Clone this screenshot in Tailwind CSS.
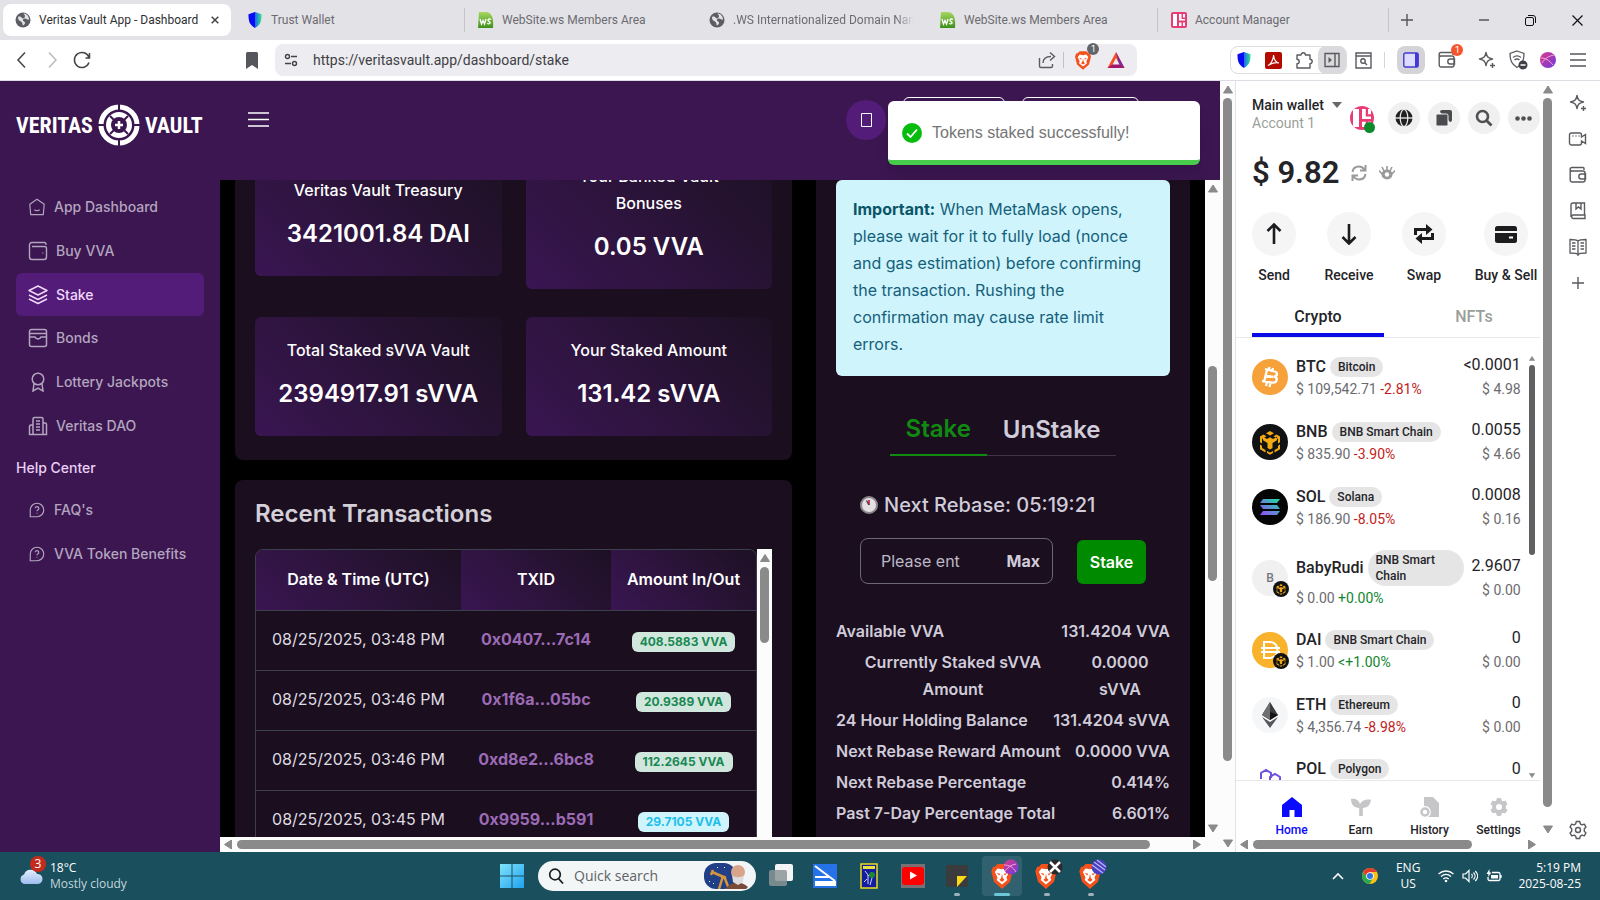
<!DOCTYPE html>
<html lang="en">
<head>
    <meta charset="UTF-8">
    <meta name="viewport" content="width=device-width, initial-scale=1.0">
    <title>Veritas Vault App - Dashboard</title>
    <script src="https://cdn.jsdelivr.net/npm/@tailwindcss/browser@4"></script>
</head>
<body class="h-screen flex flex-col overflow-hidden bg-white font-['Inter',sans-serif]">

    <!-- Shared icons -->
    <svg class="absolute w-0 h-0">
        <defs>
            <linearGradient id="gTrust" x1="0" x2="1"><stop offset=".48" stop-color="#0a0af5"/><stop offset=".52" stop-color="#1b6ff0"/><stop offset="1" stop-color="#35e08a"/></linearGradient>
            <linearGradient id="gSol" x1="0" y1="1" x2="1" y2="0"><stop stop-color="#9945ff"/><stop offset="1" stop-color="#19e0a0"/></linearGradient>
            <linearGradient id="gBall" x1="0" y1="0" x2="1" y2="1"><stop stop-color="#e0398b"/><stop offset="1" stop-color="#6a3be0"/></linearGradient>
            <linearGradient id="gWin" x1="0" y1="0" x2="1" y2="1"><stop stop-color="#7fe3fb"/><stop offset="1" stop-color="#1fa2ef"/></linearGradient>
            <linearGradient id="gCloud" x1="0" y1="0" x2="0" y2="1"><stop stop-color="#e4edfb"/><stop offset="1" stop-color="#9dbdf0"/></linearGradient>
            <linearGradient id="gWs" x1="0" y1="0" x2="0" y2="1"><stop stop-color="#a5d85f"/><stop offset="1" stop-color="#3f8f1c"/></linearGradient>
        </defs>
        <symbol id="globe" viewBox="0 0 16 16"><circle cx="8" cy="8" r="7.500" fill="#5c5e62"/><path d="M3 5c2-1 3 0 4 1s3 0 3-2-2-1-1-2.500c3 .5 5 3 5 6-1 1-2-1-4-1s-3 2-1 3 1 3-1 4c-1-1 0-3-2-4S3 8 3 5z" fill="#e3e2e7"/></symbol>
        <symbol id="ws" viewBox="0 0 16 16"><path d="M1 0h7c5 0 8 5 7 16H0z" fill="url(#gWs)"/><path d="M2 7l1.500 5L5 8.500 6.500 12 8 7M13 7.500c-3-1.500-4 1-2 2s1 3-2 2" fill="none" stroke="#fff" stroke-width="1.300"/></symbol>
        <symbol id="trust" viewBox="0 0 16 16"><path d="M8 0l6.500 2.300c0 7-.8 10.200-6.500 13.700C2.300 12.500 1.500 9.300 1.500 2.300z" fill="url(#gTrust)"/></symbol>
        <symbol id="acct" viewBox="0 0 16 16"><rect width="16" height="16" rx="2" fill="#ea3c74"/><path d="M2 2h4v12H2zM8 2h2.500v5H14v1.600H8zM12 2h2v3.500h-2zM8 10.500h2.500V14H8zM12 10.500h2V14h-2z" fill="#fff"/></symbol>
        <symbol id="brave" viewBox="0 0 24 28"><path d="M7 0h10l3 3 2 0 2 5-3 12-9 8-9-8L0 8l2-5h2z" fill="#f4511b"/><path d="M12 6l5-1 3 4-3 6 1 3-6 5-6-5 1-3-3-6 3-4z" fill="#fff"/><path d="M6 10l4 1-1 2zM18 10l-4 1 1 2zM12 11l1 5 2 2-3 2-3-2 2-2z" fill="#f4511b"/></symbol>
        <symbol id="bnb" viewBox="0 0 36 36"><circle cx="18" cy="18" r="18" fill="#111214"/><path d="M18 7l4 2.300-4 2.300-4-2.300zM11.500 10.500l3 1.800L10 15v4.500l-2-1.200v-5.800zM24.500 10.500l-3 1.800L26 15v4.500l2-1.200v-5.800zM18 13.300l3 1.700 4-2.200v3.400l-4.500 2.800v5L18 25.500 15.500 24v-5L11 16.200v-3.400l4 2.200zM8 20.500l2 1.200v2.300l3.500 2v2.500L8 25.300zM28 20.500l-2 1.200v2.300l-3.500 2v2.500l5.500-3.200zM15 27l3 1.600 3-1.600v2l-3 1.700-3-1.700z" fill="#f3a912"/></symbol>
        <symbol id="spark" viewBox="0 0 20 20"><path d="M9 2.500c.8 4.200 2 5.500 6.500 6.500-4.500 1-5.700 2.300-6.500 6.500C8.200 11.300 7 10 2.500 9 7 8 8.200 6.700 9 2.500zM15.500 13v5M13 15.500h5" fill="none" stroke="currentColor" stroke-width="1.400" stroke-linejoin="round"/></symbol>
        <symbol id="wallet" viewBox="0 0 20 20"><path d="M16 5V3.500a1 1 0 0 0-1-1H4A1.800 1.800 0 0 0 4 6.200M2.200 4.500V15A2 2 0 0 0 4.200 17H15a2 2 0 0 0 2-2V8a2 2 0 0 0-2-2H4M17.500 9h-4.200a2.500 2.500 0 0 0 0 5h4.200z" fill="none" stroke="currentColor" stroke-width="1.400"/></symbol>
        <symbol id="gear" viewBox="0 0 20 20"><path d="M8.300 1.500h3.400l.6 2.300 1.700 1 2.300-.7 1.700 3-1.700 1.700v2.400l1.700 1.700-1.700 3-2.300-.7-1.700 1-.6 2.300H8.300l-.6-2.300-1.700-1-2.300.7-1.700-3 1.700-1.700V8.800L2 7.100l1.700-3 2.300.7 1.700-1z" stroke-linejoin="round"/></symbol>
        <symbol id="up" viewBox="0 0 10 8"><path d="M5 .5L9.500 7.500H.5z" fill="#8a8a8a" stroke="#8a8a8a" stroke-linejoin="round"/></symbol>
        <symbol id="ask" viewBox="0 0 20 20"><path d="M2.500 17.500V10A7.500 7.500 0 1 1 10 17.500zM8 8a2 2 0 1 1 2.800 2c-.6.300-.8.600-.8 1.300M10 13v1" fill="none" stroke="currentColor" stroke-width="1.300"/></symbol>
    </svg>

    <!-- Tab strip -->
    <div class="h-10 shrink-0 flex items-center bg-[#e3e2e7] text-xs text-[#6b6b70] font-['Roboto',sans-serif]">
        <div class="grid grid-cols-6 flex-1 items-center h-8 pl-[3px] max-w-[1389px]">
            <button class="flex items-center gap-2 min-w-0 h-8 px-3 mr-[3px] rounded-lg bg-white text-[#2f2f33]">
                <svg class="size-4 shrink-0"><use href="#globe"/></svg>
                <span class="flex-1 text-left whitespace-nowrap">Veritas Vault App - Dashboard</span>
                <svg class="size-2 shrink-0" viewBox="0 0 8 8"><path d="M.7.7l6.600 6.600M7.300.7L.7 7.300" stroke="#444" stroke-width="1.500"/></svg>
            </button>
            <button class="flex items-center gap-2 min-w-0 h-6 px-[13px] border-r border-[#c6c5cb]">
                <svg class="size-4 shrink-0"><use href="#trust"/></svg>
                <span class="truncate">Trust Wallet</span>
            </button>
            <button class="flex items-center gap-2 min-w-0 h-6 px-[13px]">
                <svg class="size-4 shrink-0"><use href="#ws"/></svg>
                <span class="truncate">WebSite.ws Members Area</span>
            </button>
            <button class="flex items-center gap-2 min-w-0 h-6 px-[13px]">
                <svg class="size-4 shrink-0"><use href="#globe"/></svg>
                <span class="overflow-hidden whitespace-nowrap mask-r-from-90%">.WS Internationalized Domain Names</span>
            </button>
            <button class="flex items-center gap-2 min-w-0 h-6 px-[13px] border-r border-[#c6c5cb]">
                <svg class="size-4 shrink-0"><use href="#ws"/></svg>
                <span class="truncate">WebSite.ws Members Area</span>
            </button>
            <button class="flex items-center gap-2 min-w-0 h-6 px-[13px] border-r border-[#c6c5cb]">
                <svg class="size-4 shrink-0"><use href="#acct"/></svg>
                <span class="truncate">Account Manager</span>
            </button>
        </div>
        <button class="ml-3" aria-label="New tab"><svg class="size-3" viewBox="0 0 12 12"><path d="M6 0v12M0 6h12" stroke="#55555a" stroke-width="1.400"/></svg></button>
        <div class="ml-auto flex items-center gap-9 pr-[17px]">
            <button aria-label="Minimize"><svg class="size-[10px]" viewBox="0 0 10 10"><path d="M0 5h10" stroke="#111"/></svg></button>
            <button aria-label="Restore"><svg class="size-[11px]" viewBox="0 0 11 11"><rect x=".5" y="2.500" width="8" height="8" rx="1.500" fill="none" stroke="#111"/><path d="M3 .5h5a2.500 2.500 0 0 1 2.500 2.500v5" fill="none" stroke="#111"/></svg></button>
            <button aria-label="Close"><svg class="size-[11px]" viewBox="0 0 11 11"><path d="M.5.5l10 10M10.500.5l-10 10" stroke="#111" stroke-width="1.200"/></svg></button>
        </div>
    </div>

    <!-- Address bar -->
    <div class="h-[41px] shrink-0 flex items-center border-b border-[#dcdce2] text-[#5a5a5f]">
        <div class="flex items-center gap-3 pl-[13px] w-[243px]">
            <svg class="size-[18px]" viewBox="0 0 18 18"><path d="M12 1.500L5 9l7 7.500" fill="none" stroke="#444" stroke-width="1.500"/></svg>
            <svg class="size-[18px]" viewBox="0 0 18 18"><path d="M6 1.500L13 9l-7 7.500" fill="none" stroke="#bbb" stroke-width="1.500"/></svg>
            <svg class="size-[18px]" viewBox="0 0 18 18"><path d="M16 6.500A7.500 7.500 0 1 0 16 11.500M16.500 2v5h-4" fill="none" stroke="#444" stroke-width="1.500"/></svg>
        </div>
        <svg class="w-[18px] h-[18px]" viewBox="0 0 18 18"><path d="M4.500 1h9a1.500 1.500 0 0 1 1.500 1.500V18l-6-4-6 4V2.500A1.500 1.500 0 0 1 4.500 1z" fill="#55575c"/></svg>
        <div class="ml-[14px] flex-1 flex items-center h-8 px-2 rounded-lg bg-[#edecf1]">
            <svg class="size-4 shrink-0" viewBox="0 0 16 16"><g fill="none" stroke="#444" stroke-width="1.400"><circle cx="4.500" cy="4.500" r="2"/><path d="M8 4.500h6M2 11.500h6"/><circle cx="11.500" cy="11.500" r="2"/></g></svg>
            <input type="text" aria-label="Address" value="https://veritasvault.app/dashboard/stake" class="ml-[14px] flex-1 bg-transparent text-sm text-[#3f3f44] font-['Roboto',sans-serif]">
            <svg class="size-[18px]" viewBox="0 0 18 18"><path d="M1.500 7v8a1.500 1.500 0 0 0 1.500 1.500h10a1.500 1.500 0 0 0 1.500-1.500v-2M5 12c0-4 2.500-6.500 8-6.500M12 1.500l4.500 4-4.500 4" fill="none" stroke="currentColor" stroke-width="1.400"/></svg>
            <div class="mx-[7px] w-px h-4 bg-[#c2c1c8]"></div>
            <div class="relative ml-1 mr-2">
                <svg class="w-4 h-[19px]"><use href="#brave"/></svg>
                <span class="absolute -top-2 -right-2 size-3 rounded-full bg-[#63656b] text-[9px] leading-3 text-center text-white">1</span>
            </div>
            <svg class="ml-2 mr-1 size-[18px]" viewBox="0 0 18 18"><path d="M9 1l8.500 16H.5z" fill="#fa4b22"/><path d="M9 1l8.500 16L12 14z" fill="#7a2ba0"/><path d="M.5 17h17L12 13H6z" fill="#a0186b"/><path d="M9 7l3.500 6.500h-7z" fill="#edecf1"/></svg>
        </div>
        <div class="ml-[93px] flex items-center h-7 rounded-lg border border-[#dcdce2] gap-[13px] pl-[5px]">
            <svg class="size-4"><use href="#trust"/></svg>
            <svg class="size-[17px]" viewBox="0 0 17 17"><rect width="17" height="17" rx="2" fill="#b30b00"/><path d="M3 13.500c2-.5 6-6 5.500-10.500C9 8 11 10.500 14 11c-3-.8-7 0-11 2.500z" fill="none" stroke="#fff" stroke-width="1.200"/></svg>
            <svg class="size-[18px]" viewBox="0 0 18 18"><path d="M2 4h4a2.200 2.200 0 1 1 4.400 0H15v4.200a2.200 2.200 0 1 1 0 4.400V17H2v-4.400a2.200 2.200 0 0 0 0-4.400z" fill="none" stroke="currentColor" stroke-width="1.400" stroke-linejoin="round"/></svg>
            <div class="-ml-2 flex items-center justify-center w-7 h-7 rounded-lg bg-[#dadadc]">
                <svg class="size-4" viewBox="0 0 16 16"><path d="M1 1.500h14v13H1zM11 1.500v13" fill="none" stroke="currentColor" stroke-width="1.400"/><path d="M4.500 5v6L8 8z" fill="currentColor"/></svg>
            </div>
        </div>
        <svg class="ml-2 size-[17px]" viewBox="0 0 17 17"><path d="M1 1h15v15H1zM1 4h15" fill="none" stroke="currentColor" stroke-width="1.400"/><circle cx="8" cy="9" r="2.200" fill="none" stroke="currentColor" stroke-width="1.400"/><path d="M9.500 10.500L12 13" stroke="currentColor" stroke-width="1.400"/></svg>
        <div class="mx-[12px] w-px h-4 bg-[#d5d5da]"></div>
        <div class="flex items-center justify-center w-7 h-7 rounded-lg bg-[#d4d4d8]">
            <svg class="size-4" viewBox="0 0 16 16"><rect x=".8" y="1" width="14.400" height="14" rx="1.500" fill="#dcdcff" stroke="#4338d6" stroke-width="1.400"/><path d="M12 1h3v14h-3z" fill="#4338d6"/></svg>
        </div>
        <div class="relative ml-3">
            <svg class="size-5"><use href="#wallet"/></svg>
            <span class="absolute -top-[6px] -right-[6px] size-3 rounded-full bg-[#f5542c] text-[9px] leading-3 text-center text-white">1</span>
        </div>
        <svg class="ml-5 size-5"><use href="#spark"/></svg>
        <svg class="ml-[11px] size-5" viewBox="0 0 20 20"><path d="M9 1l7 2.500c0 7-1.500 10.500-7 14-5.500-3.500-7-7-7-14z" fill="none" stroke="currentColor" stroke-width="1.300"/><path d="M5 7.500c2.500-2 5.500-2 8 0M6.500 10c1.500-1.200 3.500-1.200 5 0" fill="none" stroke="currentColor" stroke-width="1.300"/><circle cx="15" cy="15" r="4.500" fill="#3f4146"/><path d="M12.500 15h5" stroke="#fff" stroke-width="1.500"/></svg>
        <svg class="ml-3 size-4" viewBox="0 0 16 16"><circle cx="8" cy="8" r="8" fill="url(#gBall)"/><path d="M1 6c4 0 8 2 12 7M2 11c3-5 7-7 12-8" stroke="#f4a6d4" fill="none"/></svg>
        <button class="ml-[14px] mr-[14px]" aria-label="Menu"><svg class="w-4 h-[14px]" viewBox="0 0 16 14"><path d="M0 1h16M0 7h16M0 13h16" stroke="#55575c" stroke-width="1.500"/></svg></button>
    </div>

    <div class="flex flex-1 min-h-0">
        <!-- Veritas Vault app -->
        <div class="relative flex-1 min-w-0 flex flex-col bg-[#3b1650]">
            <header class="h-[99px] shrink-0 flex items-start pl-4">
                <a href="#" class="mt-[23px] flex items-center gap-[5px] text-white text-[22px] font-bold font-['Liberation_Sans_Narrow','Roboto_Condensed',sans-serif]">
                    VERITAS
                    <svg class="size-[42px]" viewBox="0 0 42 42"><g fill="none" stroke="#fff"><circle cx="21" cy="21" r="18" stroke-width="5"/><circle cx="21" cy="21" r="10.500" stroke-width="5"/></g><path d="M21 0v6M21 36v6M0 21h6M36 21h6M12 12l4 4M30 12l-4 4M12 30l4-4M30 30l-4-4" stroke="#3b1650" stroke-width="2"/><path d="M21 17v8M17 21h8" stroke="#fff" stroke-width="2.500"/></svg>
                    VAULT
                </a>
                <button class="ml-[45px] mt-[31px]" aria-label="Toggle menu"><svg class="w-[21px] h-[15px]" viewBox="0 0 21 15"><path d="M0 1h21M0 7.500h21M0 14h21" stroke="#fff" stroke-width="1.500"/></svg></button>
                <div class="ml-auto mr-[81px] flex items-start">
                    <button class="mt-[19px] mr-[17px] size-10 flex items-center justify-center rounded-full bg-[#531c78]" aria-label="Theme"><svg class="w-[11px] h-[14px]" viewBox="0 0 11 14"><path d="M.5.5h10v13H.5z" fill="none" stroke="#fff"/></svg></button>
                    <button class="mt-4 mr-[17px] w-[102px] h-10 rounded-md border border-white" aria-label="Network"></button>
                    <button class="mt-4 w-[117px] h-10 rounded-md border border-white" aria-label="Wallet"></button>
                </div>
            </header>

            <div class="flex flex-1 min-h-0">
                <nav class="w-[220px] shrink-0 px-4 pt-[5px] text-sm font-medium text-[#b3a5bf]">
                    <a href="#" class="flex items-center h-11 pl-3 gap-2"><svg class="size-[18px]" viewBox="0 0 20 20"><path d="M10 1.500l8 5.500-1 11.500H3L2 7zM7 13c2 1.500 4 1.500 6 0" fill="none" stroke="currentColor" stroke-width="1.300" stroke-linejoin="round"/></svg>App Dashboard</a>
                    <a href="#" class="flex items-center h-11 pl-3 gap-2"><svg class="size-5" viewBox="0 0 20 20"><path d="M18 4V3a1.500 1.500 0 0 0-1.500-1.500H4A2.300 2.300 0 0 0 1.500 4v12A2.500 2.500 0 0 0 4 18.500h12a2.500 2.500 0 0 0 2.500-2.500V7.500A2 2 0 0 0 16.500 5.500H4M14.500 12h.8" fill="none" stroke="currentColor" stroke-width="1.400"/></svg>Buy VVA</a>
                    <a href="#" class="flex items-center h-[43px] pl-3 gap-2 rounded-md bg-[#531c78] text-[#f0d9fb]"><svg class="size-5" viewBox="0 0 20 20"><path d="M10 1l9 4.500-9 4.500-9-4.500zM1 10l9 4.500L19 10M1 14l9 4.500 9-4.500" fill="none" stroke="currentColor" stroke-width="1.400" stroke-linejoin="round"/></svg>Stake</a>
                    <a href="#" class="flex items-center h-11 pl-3 gap-2"><svg class="size-5" viewBox="0 0 20 20"><path d="M1.500 3.500a2 2 0 0 1 2-2h13a2 2 0 0 1 2 2v13a2 2 0 0 1-2 2h-13a2 2 0 0 1-2-2zM1.500 5.500h17M1.500 9H7c1 2.500 5 2.500 6 0h5.500" fill="none" stroke="currentColor" stroke-width="1.500"/></svg>Bonds</a>
                    <a href="#" class="flex items-center h-11 pl-3 gap-2"><svg class="size-5" viewBox="0 0 20 20"><circle cx="10" cy="7" r="5.800" fill="none" stroke="currentColor" stroke-width="1.500"/><path d="M6 11.500L5 19l5-3 5 3-1-7.500" fill="none" stroke="currentColor" stroke-width="1.500"/></svg>Lottery Jackpots</a>
                    <a href="#" class="flex items-center h-11 pl-3 gap-2"><svg class="size-5" viewBox="0 0 20 20"><path d="M5 18.500V3a1.500 1.500 0 0 1 1.500-1.500h7A1.500 1.500 0 0 1 15 3v15.500zM5 9H3a1.500 1.500 0 0 0-1.500 1.500v8H5M15 7h2a1.500 1.500 0 0 1 1.500 1.500v10H15M8 5h4M8 8h4M8 11h4M8 14h4" fill="none" stroke="currentColor" stroke-width="1.500"/></svg>Veritas DAO</a>
                    <p class="h-10 leading-10 text-[#ead0f5]">Help Center</p>
                    <a href="#" class="flex items-center h-11 pl-3 gap-2"><svg class="size-[18px]"><use href="#ask"/></svg>FAQ's</a>
                    <a href="#" class="flex items-center h-[43px] pl-3 gap-2"><svg class="size-[18px]"><use href="#ask"/></svg>VVA Token Benefits</a>
                </nav>

                <div class="flex-1 min-w-0 flex flex-col bg-[#fcfcfc]">
                    <div class="flex flex-1 min-h-0">
                        <main class="flex-1 min-w-0 grid grid-cols-[minmax(0,557fr)_minmax(0,374fr)] grid-rows-[100%] gap-6 px-[15px] overflow-hidden bg-black text-white">
                            <div class="min-w-0 flex flex-col gap-5 -mt-[57px]">
                                <section class="shrink-0 grid grid-cols-2 items-center gap-x-6 gap-y-7 px-5 pt-5 pb-6 rounded-lg bg-[#1b0e1f] text-center font-medium leading-[27px]">
                                    <div class="px-5 pt-5 pb-6 rounded-md bg-linear-45 from-[#3a1552] to-[#1d1023]"><h3>Veritas Vault Treasury</h3><p class="mt-3 text-2xl leading-9 font-semibold">3421001.84 DAI</p></div>
                                    <div class="px-5 pt-5 pb-6 rounded-md bg-linear-45 from-[#3a1552] to-[#1d1023]"><h3>Your Banked Vault<br>Bonuses</h3><p class="mt-3 text-2xl leading-9 font-semibold">0.05 VVA</p></div>
                                    <div class="px-5 pt-5 pb-6 rounded-md bg-linear-45 from-[#3a1552] to-[#1d1023]"><h3>Total Staked sVVA Vault</h3><p class="mt-3 text-2xl leading-9 font-semibold">2394917.91 sVVA</p></div>
                                    <div class="px-5 pt-5 pb-6 rounded-md bg-linear-45 from-[#3a1552] to-[#1d1023]"><h3>Your Staked Amount</h3><p class="mt-3 text-2xl leading-9 font-semibold">131.42 sVVA</p></div>
                                </section>

                                <section class="flex-1 min-h-0 flex flex-col px-5 -mb-[57px] rounded-t-lg bg-[#1b0e1f]">
                                    <h2 class="pt-4 pb-[17px] text-2xl leading-9 font-semibold text-[#d3d0d8]">Recent Transactions</h2>
                                    <div class="flex flex-1 min-h-0 overflow-hidden">
                                        <div class="flex-1 self-start rounded-t-lg border border-[#3c3f4e] overflow-hidden">
                                            <table class="w-full text-center text-[#dedbe1]">
                                                <thead>
                                                    <tr class="h-[60px] text-white">
                                                        <th class="w-[41%] pb-[2px] font-semibold bg-linear-45 from-[#3a1552] to-[#1d1023]">Date &amp; Time (UTC)</th>
                                                        <th class="w-[30%] pb-[2px] font-semibold bg-linear-45 from-[#3a1552] to-[#1d1023]">TXID</th>
                                                        <th class="pb-[2px] font-semibold bg-linear-45 from-[#3a1552] to-[#1d1023]">Amount In/Out</th>
                                                    </tr>
                                                </thead>
                                                <tbody>
                                                    <tr class="h-[60px] border-t border-[#3c3f4e]"><td class="pb-[2px]">08/25/2025, 03:48 PM</td><td class="pb-[2px]"><a href="#" class="font-bold text-[#9b6bb5]">0x0407...7c14</a></td><td><span class="inline-block px-2 rounded-md bg-[#d1e7dd] text-xs leading-5 font-bold text-[#198754]">408.5883 VVA</span></td></tr>
                                                    <tr class="h-[60px] border-t border-[#3c3f4e]"><td class="pb-[2px]">08/25/2025, 03:46 PM</td><td class="pb-[2px]"><a href="#" class="font-bold text-[#9b6bb5]">0x1f6a...05bc</a></td><td><span class="inline-block px-2 rounded-md bg-[#d1e7dd] text-xs leading-5 font-bold text-[#198754]">20.9389 VVA</span></td></tr>
                                                    <tr class="h-[60px] border-t border-[#3c3f4e]"><td class="pb-[2px]">08/25/2025, 03:46 PM</td><td class="pb-[2px]"><a href="#" class="font-bold text-[#9b6bb5]">0xd8e2...6bc8</a></td><td><span class="inline-block px-2 rounded-md bg-[#d1e7dd] text-xs leading-5 font-bold text-[#198754]">112.2645 VVA</span></td></tr>
                                                    <tr class="h-[60px] border-t border-[#3c3f4e]"><td class="pb-[2px]">08/25/2025, 03:45 PM</td><td class="pb-[2px]"><a href="#" class="font-bold text-[#9b6bb5]">0x9959...b591</a></td><td><span class="inline-block px-2 rounded-md bg-[#cff4fc] text-xs leading-5 font-bold text-[#21bfe8]">29.7105 VVA</span></td></tr>
                                                </tbody>
                                            </table>
                                        </div>
                                        <div class="w-[15px] flex flex-col items-center gap-1 pt-1 bg-[#fcfcfc]">
                                            <svg class="w-[10px] h-[10px] shrink-0"><use href="#up"/></svg>
                                            <div class="w-[9px] h-[76px] rounded-full bg-[#8a8a8a]"></div>
                                        </div>
                                    </div>
                                </section>
                            </div>

                            <aside class="min-w-0 px-5 bg-[#1b0e1f] text-[#d0ccda] text-center">
                                <div class="px-[17px] pt-4 pb-[18px] rounded-md bg-[#cff4fc] text-[#14607a] text-left leading-[27px]">
                                    <strong class="font-bold text-[#0b5568]">Important:</strong> When MetaMask opens, please wait for it to fully load (nonce and gas estimation) before confirming the transaction. Rushing the confirmation may cause rate limit errors.
                                </div>

                                <div class="mt-7 flex justify-center text-2xl font-semibold">
                                    <button class="px-4 h-[52px] border-b-2 border-[#118a11] text-[#118a11]">Stake</button>
                                    <button class="px-4 h-[52px] border-b border-[#3f3547]">UnStake</button>
                                </div>

                                <div class="mt-[34px] w-[286px] mx-auto">
                                    <p class="flex items-center gap-[6px] text-xl leading-[30px] font-medium">
                                        <svg class="size-[18px]" viewBox="0 0 18 18"><circle cx="9" cy="9" r="8" fill="#e3dfe2" stroke="#8a868c" stroke-width="2"/><path d="M9 9V4" stroke="#e0245e" stroke-width="1.800"/><path d="M9 9L6.500 4.500" stroke="#444" stroke-width="1.500"/></svg>
                                        Next Rebase: 05:19:21
                                    </p>
                                    <div class="mt-[18px] flex items-end justify-between">
                                        <div class="flex items-center w-[193px] h-[46px] pl-5 pr-3 rounded-lg border border-[#6d6675]">
                                            <input type="text" aria-label="Amount to stake" placeholder="Please ent" class="flex-1 min-w-0 bg-transparent placeholder:text-[#bdb8c6]">
                                            <button class="font-bold">Max</button>
                                        </div>
                                        <button class="w-[69px] h-11 rounded-md bg-[#008a00] text-white font-semibold">Stake</button>
                                    </div>
                                </div>

                                <dl class="mt-[34px] space-y-1 font-semibold leading-[27px]">
                                    <div class="flex justify-between"><dt>Available VVA</dt><dd>131.4204 VVA</dd></div>
                                    <div class="grid grid-cols-[234fr_100fr]"><dt class="px-6">Currently Staked sVVA Amount</dt><dd class="px-4">0.0000 sVVA</dd></div>
                                    <div class="flex justify-between"><dt>24 Hour Holding Balance</dt><dd>131.4204 sVVA</dd></div>
                                    <div class="flex justify-between"><dt>Next Rebase Reward Amount</dt><dd>0.0000 VVA</dd></div>
                                    <div class="flex justify-between"><dt>Next Rebase Percentage</dt><dd>0.414%</dd></div>
                                    <div class="flex justify-between"><dt>Past 7-Day Percentage Total</dt><dd>6.601%</dd></div>
                                </dl>
                            </aside>
                        </main>
                        <div class="w-[15px] flex flex-col items-center py-1">
                            <svg class="w-[10px] h-[9px]"><use href="#up"/></svg>
                            <div class="flex-1 w-[9px] pt-[173px]"><div class="h-[47%] rounded-full bg-[#8a8a8a]"></div></div>
                            <svg class="w-[10px] h-[9px] rotate-180"><use href="#up"/></svg>
                        </div>
                    </div>
                    <div class="h-[15px] flex items-center gap-1 pl-[3px] pr-[18px]">
                        <svg class="w-[10px] h-[9px] -rotate-90"><use href="#up"/></svg>
                        <div class="flex-1"><div class="w-[96%] h-[9px] rounded-full bg-[#8a8a8a]"></div></div>
                        <svg class="w-[10px] h-[9px] rotate-90"><use href="#up"/></svg>
                    </div>
                </div>
            </div>

            <!-- Toast -->
            <div role="alert" class="absolute top-5 right-5 w-[312px] h-16 flex items-center gap-[10px] pt-1 px-[14px] rounded-md border-b-5 border-[#47cc4b] bg-white text-[#757575] font-['Liberation_Sans',sans-serif] shadow-lg">
                <svg class="size-5" viewBox="0 0 20 20"><circle cx="10" cy="10" r="10" fill="#07bc0c"/><path d="M5 10.500l3.500 3.500L15 6.500" fill="none" stroke="#fff" stroke-width="1.800"/></svg>
                Tokens staked successfully!
            </div>
        </div>

        <!-- Page scrollbar -->
        <div class="w-4 flex flex-col items-center gap-1 py-1 bg-[#fcfcfc] border-r border-[#e2e2e6]">
            <svg class="w-[10px] h-[9px]"><use href="#up"/></svg>
            <div class="flex-1 w-[9px]"><div class="h-[90%] rounded-full bg-[#8a8a8a]"></div></div>
            <svg class="w-[10px] h-[9px] rotate-180"><use href="#up"/></svg>
        </div>

        <!-- Wallet side panel -->
        <div class="w-[319px] shrink-0 flex flex-col font-['Roboto',sans-serif] text-[#242428]">
            <div class="flex flex-1 min-h-0">
                <div class="flex-1 min-w-0 flex flex-col">
                    <div class="flex items-center pl-4 pt-4 h-[58px]">
                        <div class="pb-2 text-sm leading-[18px]">
                            <button class="flex items-center gap-2 font-medium">Main wallet <svg class="w-[10px] h-[6px]" viewBox="0 0 10 6"><path d="M0 0h10L5 6z" fill="#66686c"/></svg></button>
                            <p class="text-[#9a9f9a]">Account 1</p>
                        </div>
                        <div class="relative ml-2 mr-[14px] size-6">
                            <svg class="size-6 rounded-full"><use href="#acct"/></svg>
                            <span class="absolute -bottom-[3px] -right-px size-[11px] rounded-full bg-[#0c8a2c]"></span>
                        </div>
                        <div class="flex gap-2">
                            <button class="size-8 flex items-center justify-center rounded-full bg-[#f0f0f0]" aria-label="Networks"><svg class="size-[18px]" viewBox="0 0 18 18"><circle cx="9" cy="9" r="8.500" fill="#222"/><ellipse cx="9" cy="9" rx="3.800" ry="8.500" fill="none" stroke="#f0f0f0" stroke-width="1.200"/><path d="M0 9h18" stroke="#f0f0f0" stroke-width="1.300"/></svg></button>
                            <button class="size-8 flex items-center justify-center rounded-full bg-[#f0f0f0]" aria-label="Copy"><svg class="size-4" viewBox="0 0 16 16"><path d="M4 2a2 2 0 0 1 2-2h8a2 2 0 0 1 2 2v8a2 2 0 0 1-2 2z" fill="#4a4b4e"/><rect y="4" width="12" height="12" rx="1.500" fill="#4a4b4e" stroke="#f0f0f0"/></svg></button>
                            <button class="size-8 flex items-center justify-center rounded-full bg-[#f0f0f0]" aria-label="Search"><svg class="size-[18px]" viewBox="0 0 18 18"><circle cx="7.500" cy="7.500" r="5.500" fill="none" stroke="#505154" stroke-width="2.600"/><path d="M11.500 11.500l5 5" stroke="#505154" stroke-width="2.800"/></svg></button>
                            <button class="size-8 flex items-center justify-center rounded-full bg-[#f0f0f0]" aria-label="More"><svg class="w-[17px] h-[5px]" viewBox="0 0 17 5"><g fill="#505154"><circle cx="2.500" cy="2.500" r="2.300"/><circle cx="8.500" cy="2.500" r="2.300"/><circle cx="14.500" cy="2.500" r="2.300"/></g></svg></button>
                        </div>
                    </div>

                    <div class="flex items-center gap-3 pl-4 mt-4 h-9">
                        <span class="text-[31px] leading-9 font-semibold">$ 9.82</span>
                        <svg class="size-4" viewBox="0 0 16 16"><path d="M1.500 7C2 3.500 4.500 1.500 8 1.500c2.500 0 4 1 5.500 3M14.500 9c-.5 3.500-3 5.500-6.500 5.500-2.500 0-4-1-5.500-3M14.500 0v5.500H9M1.500 16v-5.500H7" fill="none" stroke="#9a9a9c" stroke-width="2"/></svg>
                        <svg class="size-4" viewBox="0 0 16 16"><ellipse cx="8" cy="9.500" rx="5.500" ry="5" fill="#9a9a9c"/><circle cx="8" cy="9.500" r="2.200" fill="#fff"/><path d="M8 5V1M5 6L3 2M11 6l2-4M3 9L0 5.500M13 9l3-3.500" stroke="#9a9a9c" stroke-width="1.600"/></svg>
                    </div>

                    <div class="flex mt-[21px] pl-4 gap-[31px] text-sm leading-5 font-medium text-center whitespace-nowrap">
                        <button class="flex flex-col items-center w-11 gap-[9px]"><span class="size-11 flex items-center justify-center rounded-full bg-[#f5f5f5]"><svg class="w-4 h-[22px]" viewBox="0 0 16 22"><path d="M8 21V2M1.500 8L8 1.500 14.500 8" fill="none" stroke="#1c1c1e" stroke-width="2.600"/></svg></span>Send</button>
                        <button class="flex flex-col items-center w-11 gap-[9px]"><span class="size-11 flex items-center justify-center rounded-full bg-[#f5f5f5]"><svg class="w-4 h-[22px] rotate-180" viewBox="0 0 16 22"><path d="M8 21V2M1.500 8L8 1.500 14.500 8" fill="none" stroke="#1c1c1e" stroke-width="2.600"/></svg></span>Receive</button>
                        <button class="flex flex-col items-center w-11 gap-[9px]"><span class="size-11 flex items-center justify-center rounded-full bg-[#f5f5f5]"><svg class="w-5 h-5" viewBox="0 0 20 20"><path d="M1.500 11V5.500h12M18.500 9v5.500h-12" fill="none" stroke="#1c1c1e" stroke-width="3"/><path d="M12 0l6.500 5.500L12 11zM8 9l-6.500 5.500L8 20z" fill="#1c1c1e"/></svg></span>Swap</button>
                        <button class="flex flex-col items-center w-[58px] gap-[9px]"><span class="size-11 flex items-center justify-center rounded-full bg-[#f5f5f5]"><svg class="w-[22px] h-[17px]" viewBox="0 0 22 17"><path d="M0 5V2.500A2.500 2.500 0 0 1 2.500 0h17A2.500 2.500 0 0 1 22 2.500V5zM0 7h22v7.500a2.500 2.500 0 0 1-2.500 2.500h-17A2.500 2.500 0 0 1 0 14.500z" fill="#1c1c1e"/><path d="M14 11.500h4" stroke="#fff" stroke-width="2"/></svg></span>Buy &amp; Sell</button>
                    </div>

                    <div class="mt-[13px] flex items-end pl-4 gap-6 border-b border-[#e8e8ea] text-base font-medium text-center">
                        <button class="w-[132px] h-[39px] pt-[2px] border-b-4 border-[#0a0ae6]">Crypto</button>
                        <button class="w-[132px] h-[39px] pt-[2px] border-b-4 border-transparent text-[#9a9f9a]">NFTs</button>
                    </div>

                    <div class="flex flex-1 min-h-0 overflow-hidden">
                        <ul class="flex-1 pl-4 pt-[6px] text-base leading-6">
                            <li class="flex items-center h-[65px] gap-2">
                                <svg class="size-9 shrink-0" viewBox="0 0 36 36"><circle cx="18" cy="18" r="18" fill="#f7a13b"/><path d="M13 10l10 2.500c3 .8 2.500 5-1 5 4 .7 3.500 6.500-1 6.200L10 22M15 11l-3 12M12.500 16.500l9 1.500M17.500 8l-1 4M21 9l-1 4M15 23l-1 4M18.500 24l-1 4" fill="none" stroke="#fff" stroke-width="2.300"/></svg>
                                <div class="flex-1"><div class="flex items-center gap-1 font-medium">BTC<span class="px-2 rounded-full bg-[#e5e5e6] text-xs leading-5">Bitcoin</span></div><p class="text-sm leading-5 text-[#6b6b70]">$ 109,542.71 <span class="text-[#c01d1d]">-2.81%</span></p></div>
                                <div class="text-right"><p>&lt;0.0001</p><p class="text-sm leading-6 text-[#6b6b70]">$ 4.98</p></div>
                            </li>
                            <li class="flex items-center h-[65px] gap-2">
                                <svg class="size-9 shrink-0"><use href="#bnb"/></svg>
                                <div class="flex-1"><div class="flex items-center gap-1 font-medium">BNB<span class="px-2 rounded-full bg-[#e5e5e6] text-xs leading-5">BNB Smart Chain</span></div><p class="text-sm leading-5 text-[#6b6b70]">$ 835.90 <span class="text-[#c01d1d]">-3.90%</span></p></div>
                                <div class="text-right"><p>0.0055</p><p class="text-sm leading-6 text-[#6b6b70]">$ 4.66</p></div>
                            </li>
                            <li class="flex items-center h-[65px] gap-2">
                                <svg class="size-9 shrink-0" viewBox="0 0 36 36"><circle cx="18" cy="18" r="18" fill="#050505"/><path d="M11 10h17l-3 4H8zM8 16h17l3 4H11zM11 22h17l-3 4H8z" fill="url(#gSol)"/></svg>
                                <div class="flex-1"><div class="flex items-center gap-1 font-medium">SOL<span class="px-2 rounded-full bg-[#e5e5e6] text-xs leading-5">Solana</span></div><p class="text-sm leading-5 text-[#6b6b70]">$ 186.90 <span class="text-[#c01d1d]">-8.05%</span></p></div>
                                <div class="text-right"><p>0.0008</p><p class="text-sm leading-6 text-[#6b6b70]">$ 0.16</p></div>
                            </li>
                            <li class="flex items-center h-[78px] gap-2">
                                <div class="relative size-9 shrink-0 rounded-full bg-[#f0f0f1] text-xs leading-9 text-center font-medium text-[#77777b]">B<svg class="absolute -right-px -bottom-px size-4"><use href="#bnb"/></svg></div>
                                <div class="flex-1 pt-[3px]"><div class="flex items-center gap-1 font-medium">BabyRudi<span class="w-24 px-2 py-[2px] rounded-full bg-[#e5e5e6] text-xs leading-4">BNB Smart Chain</span></div><p class="text-sm leading-6 text-[#6b6b70]">$ 0.00 <span class="text-[#11862e]">+0.00%</span></p></div>
                                <div class="text-right"><p>2.9607</p><p class="text-sm leading-6 text-[#6b6b70]">$ 0.00</p></div>
                            </li>
                            <li class="flex items-center h-[65px] gap-2">
                                <div class="relative size-9 shrink-0"><svg class="size-9" viewBox="0 0 36 36"><circle cx="18" cy="18" r="18" fill="#f9b22c"/><path d="M12 10h6c10 0 10 16 0 16h-6zM9 16h19M9 20h19" fill="none" stroke="#fff" stroke-width="2"/></svg><svg class="absolute -right-px -bottom-px size-4"><use href="#bnb"/></svg></div>
                                <div class="flex-1"><div class="flex items-center gap-1 font-medium">DAI<span class="px-2 rounded-full bg-[#e5e5e6] text-xs leading-5">BNB Smart Chain</span></div><p class="text-sm leading-5 text-[#6b6b70]">$ 1.00 <span class="text-[#11862e]">&lt;+1.00%</span></p></div>
                                <div class="text-right"><p>0</p><p class="text-sm leading-6 text-[#6b6b70]">$ 0.00</p></div>
                            </li>
                            <li class="flex items-center h-[65px] gap-2">
                                <svg class="size-9 shrink-0" viewBox="0 0 36 36"><circle cx="18" cy="18" r="18" fill="#f5f6f8"/><path d="M18 5l8 13-8 5-8-5z" fill="#3c3c3d"/><path d="M18 5v18l-8-5z" fill="#6f6f72"/><path d="M18 15l8 3-8 5z" fill="#141414"/><path d="M10 20l8 5 8-5-8 11z" fill="#55565a"/></svg>
                                <div class="flex-1"><div class="flex items-center gap-1 font-medium">ETH<span class="px-2 rounded-full bg-[#e5e5e6] text-xs leading-5">Ethereum</span></div><p class="text-sm leading-5 text-[#6b6b70]">$ 4,356.74 <span class="text-[#c01d1d]">-8.98%</span></p></div>
                                <div class="text-right"><p>0</p><p class="text-sm leading-6 text-[#6b6b70]">$ 0.00</p></div>
                            </li>
                            <li class="flex items-start h-[65px] pt-[10px] gap-2">
                                <svg class="size-9 mt-1 shrink-0" viewBox="0 0 36 36"><path d="M9 18v-6l5-3 5 3v5M18 16l5-3 5 3v6l-5 3-5-3z" fill="none" stroke="#6f4fe0" stroke-width="2"/></svg>
                                <div class="flex-1 flex items-center gap-1 font-medium">POL<span class="px-2 rounded-full bg-[#e5e5e6] text-xs leading-5">Polygon</span></div>
                                <p>0</p>
                            </li>
                        </ul>
                        <div class="w-5 pl-[3px] flex flex-col items-center gap-1 pt-[18px] pb-[2px]">
                            <svg class="w-[6px] h-[5px]"><use href="#up"/></svg>
                            <div class="flex-1 w-[6px]"><div class="h-[47%] rounded-full bg-[#606062]"></div></div>
                            <svg class="w-[6px] h-[5px] rotate-180"><use href="#up"/></svg>
                        </div>
                    </div>

                    <div class="h-[57px] shrink-0 grid grid-cols-4 pl-[21px] pr-[7px] pt-4 border-t border-[#e8e8ea] text-xs leading-[18px] font-medium text-center">
                        <a href="#" class="flex flex-col items-center gap-1 text-[#0a0aff]"><svg class="size-5 shrink-0" viewBox="0 0 20 20"><path d="M10 0l10 8v12h-7.500v-7h-5v7H0V8z" fill="currentColor"/></svg>Home</a>
                        <a href="#" class="flex flex-col items-center gap-1"><svg class="size-5 shrink-0" viewBox="0 0 22 20"><path d="M0 1c6-1 9 2 10 6 1-3 5-6 12-5-1 7-5 9-9 9v9H9v-9C4 11 0 8 0 1z" fill="#c6c6c8"/></svg>Earn</a>
                        <a href="#" class="flex flex-col items-center gap-1"><svg class="size-5 shrink-0" viewBox="0 0 20 20"><path d="M4 0h9l6 6v14H8a6 6 0 0 0-4-11z" fill="#c6c6c8"/><circle cx="5" cy="15" r="3.500" fill="none" stroke="#c6c6c8" stroke-width="2.500"/></svg>History</a>
                        <a href="#" class="flex flex-col items-center gap-1"><svg class="size-5 shrink-0" viewBox="0 0 20 20"><use href="#gear" fill="#c6c6c8" stroke="#c6c6c8"/><circle cx="10" cy="10" r="3" fill="#fff"/></svg>Settings</a>
                    </div>
                </div>
                <div class="w-[15px] flex flex-col items-center gap-1 pt-1 pb-[3px]">
                    <svg class="w-[10px] h-[9px]"><use href="#up"/></svg>
                    <div class="flex-1 w-[9px]"><div class="h-[98%] rounded-full bg-[#8a8a8a]"></div></div>
                    <svg class="w-[10px] h-[9px] rotate-180"><use href="#up"/></svg>
                </div>
            </div>
            <div class="h-[15px] flex items-center gap-1 pl-[3px] pr-[18px]">
                <svg class="w-[10px] h-[9px] -rotate-90"><use href="#up"/></svg>
                <div class="flex-1"><div class="w-[81%] h-[9px] rounded-full bg-[#8a8a8a]"></div></div>
                <svg class="w-[10px] h-[9px] rotate-90"><use href="#up"/></svg>
            </div>
        </div>

        <!-- Browser sidebar -->
        <div class="w-[45px] shrink-0 flex flex-col items-center gap-4 pt-3 pb-3 text-[#5a5a5f]">
            <svg class="size-5"><use href="#spark"/></svg>
            <svg class="size-5" viewBox="0 0 20 20"><path d="M3.500 4h8a2 2 0 0 1 2 2v2l4-2.500v9l-4-2.500v2a2 2 0 0 1-2 2h-8a2 2 0 0 1-2-2V6a2 2 0 0 1 2-2zM4.500 7h1M7.500 7h1M10.500 7h1" fill="none" stroke="currentColor" stroke-width="1.400"/></svg>
            <svg class="size-5"><use href="#wallet"/></svg>
            <svg class="size-5" viewBox="0 0 20 20"><path d="M16.500 14V2H5a2 2 0 0 0-2 2v12M17 17.500H5a1.800 1.800 0 0 1 0-3.500h12zM8 2v6l2.500-2L13 8V2" fill="none" stroke="currentColor" stroke-width="1.400"/></svg>
            <svg class="size-5" viewBox="0 0 20 20"><path d="M10 4c-1-1-3-1.500-8-1.500V16c5 0 7 0 8 1.500 1-1.500 3-1.500 8-1.500V2.500C13 2.500 11 3 10 4zM10 4v15M4 6h3.500M4 9h3.500M4 12h3.500M12.500 6H16M12.500 9H16M12.500 12H16" fill="none" stroke="currentColor" stroke-width="1.300"/></svg>
            <svg class="size-5" viewBox="0 0 20 20"><path d="M10 4v12M4 10h12" stroke="currentColor" stroke-width="1.400"/></svg>
            <svg class="mt-auto size-5" viewBox="0 0 20 20"><use href="#gear" fill="none" stroke="#5a5a5f" stroke-width="1.400"/><circle cx="10" cy="10" r="2.500" fill="none" stroke="currentColor" stroke-width="1.400"/></svg>
        </div>
    </div>

    <!-- Taskbar -->
    <footer class="h-12 shrink-0 flex items-center bg-[#1a4f5e] text-white text-xs leading-4 font-['Open_Sans',sans-serif]">
        <div class="flex-1 basis-0 flex items-center gap-[7px] pl-[19px]">
            <div class="relative">
                <svg class="w-6 h-4" viewBox="0 0 24 16"><path d="M5 16a5 5 0 0 1 0-9.500A7 7 0 0 1 18 6a5 5 0 0 1 1 10z" fill="url(#gCloud)"/></svg>
                <span class="absolute -top-3 -right-[3px] size-4 rounded-full bg-[#c42b1c] text-center">3</span>
            </div>
            <p>18°C<br><span class="text-[#c3d6db]">Mostly cloudy</span></p>
        </div>
        <div class="ml-[10px] flex items-center">
            <svg class="size-6 mr-[14px]" viewBox="0 0 24 24"><path d="M0 0h11.500v11.500H0zM12.500 0H24v11.500H12.500zM0 12.500h11.500V24H0zM12.500 12.500H24V24H12.500z" fill="url(#gWin)"/></svg>
            <div class="flex items-center w-[218px] h-[30px] mr-[6px] pl-[10px] pr-[6px] rounded-full bg-[#f3f6f7]">
                <svg class="size-4 shrink-0" viewBox="0 0 16 16"><circle cx="7" cy="6.500" r="5.300" fill="none" stroke="#1d1d1f" stroke-width="1.700"/><path d="M10.500 10.500l4.500 5" stroke="#1d1d1f" stroke-width="1.800"/></svg>
                <input type="text" aria-label="Search" placeholder="Quick search" class="ml-[10px] flex-1 min-w-0 text-sm placeholder:text-[#5f6266]">
                <svg class="w-[46px] h-[26px] shrink-0" viewBox="0 0 46 26"><rect width="32" height="26" rx="12" fill="#203f86"/><path d="M8 9l14 6M19 13l-4 13M20 13l5 13M9 7l-2 5" stroke="#d8963c" stroke-width="2.500"/><path d="M5 18l1 1M20 4l1 1M13 4l1 1M9 20l1 1" stroke="#fff"/><path d="M22 26c2-7 16-9 22-2l-2 2z" fill="#7a4a38"/><circle cx="34" cy="9" r="7" fill="#d9a58a"/><path d="M28 12c2 3 10 3 12 0l-1 7-5 3-5-3z" fill="#dcdcdc"/></svg>
            </div>
            <div class="flex items-center gap-[6px]">
                <svg class="w-[38px] h-10" viewBox="0 0 38 40"><rect x="13" y="8" width="18" height="17" rx="2" fill="#f2f4f5"/><rect x="7" y="14" width="18" height="16" rx="2" fill="#8b9498" opacity=".85"/></svg>
                <svg class="w-[38px] h-10" viewBox="0 0 38 40"><rect x="7" y="8" width="24" height="24" fill="#2672e8"/><path d="M9 10l20 15M9 21h14" stroke="#fff" stroke-width="2"/><path d="M9 25h21v5H9z" fill="#fff"/></svg>
                <svg class="w-[38px] h-10" viewBox="0 0 38 40"><path d="M11 8h16v24H11z" fill="#141ca0" stroke="#e8dc1c" stroke-width="1.500"/><path d="M13 10h12v3H13z" fill="#e8e13a"/><path d="M15 15l3 4v9M18 20l4-4M14 26l3-3M22 22l-2 7" stroke="#cdd4ff" fill="none"/><circle cx="22" cy="19" r="3" fill="#1c8a2c"/></svg>
                <svg class="w-[38px] h-10" viewBox="0 0 38 40"><rect x="7" y="8" width="24" height="24" fill="#7b6f73"/><rect x="8" y="11" width="22" height="18" rx="3" fill="#f00"/><path d="M16 15.500v8l7-4z" fill="#fff"/></svg>
                <svg class="w-[38px] h-10" viewBox="0 0 38 40"><rect x="8" y="9" width="22" height="22" rx="2" fill="#3b3b3e"/><path d="M19 20h10L19 31z" fill="#f7d917"/><rect x="16" y="37" width="6" height="3" rx="1.500" fill="#9eb1b8"/></svg>
                <svg class="w-[40px] h-10 rounded bg-white/10" viewBox="0 0 40 40"><use href="#brave" x="9" y="8" width="22" height="25"/><circle cx="29" cy="11" r="7.500" fill="url(#gBall)"/><path d="M22 9c5 0 9 2 12 7M23 15c3-4 6-6 11-7" stroke="#f4a6d4" fill="none"/><rect x="12" y="37" width="16" height="3" rx="1.500" fill="#6cc8d8"/></svg>
                <svg class="w-[38px] h-10" viewBox="0 0 38 40"><use href="#brave" x="7" y="8" width="22" height="25"/><circle cx="27" cy="11" r="7.500" fill="#2a2a2c"/><path d="M22 6l10 10M32 6L22 16" stroke="#fff" stroke-width="2.500"/><rect x="16" y="37" width="6" height="3" rx="1.500" fill="#9eb1b8"/></svg>
                <svg class="w-[38px] h-10" viewBox="0 0 38 40"><use href="#brave" x="7" y="8" width="22" height="25"/><circle cx="27" cy="11" r="7.500" fill="#4a3fc0"/><path d="M22 6l11 8M20 9l11 8M25 4l9 7" stroke="#b9b4f5" stroke-width="1.300"/><rect x="16" y="37" width="6" height="3" rx="1.500" fill="#9eb1b8"/></svg>
            </div>
        </div>
        <div class="flex-1 basis-0 flex items-center justify-end pr-[19px]">
            <svg class="w-3 h-2 mr-[18px]" viewBox="0 0 12 8"><path d="M1 7l5-5 5 5" fill="none" stroke="#fff" stroke-width="1.600"/></svg>
            <svg class="size-4 mr-[18px]" viewBox="0 0 16 16"><circle cx="8" cy="8" r="8" fill="#fbc116"/><path d="M1.100 4A8 8 0 0 1 15 4H8L5 9.500z" fill="#e33b2e"/><path d="M1.100 4A8 8 0 0 0 7.500 16l3.500-6H5z" fill="#2da94f"/><circle cx="8" cy="8" r="3.800" fill="#fff"/><circle cx="8" cy="8" r="3" fill="#2b74ea"/></svg>
            <button class="mr-[18px] text-center">ENG<br>US</button>
            <div class="flex gap-2 mr-4">
                <svg class="size-4" viewBox="0 0 16 16"><path d="M.5 6c4.500-4 10.500-4 15 0M3 8.500c3-2.700 7-2.700 10 0M5.300 11c1.700-1.400 3.700-1.400 5.400 0" fill="none" stroke="#fff" stroke-width="1.300"/><circle cx="8" cy="13" r="1.300" fill="#fff"/></svg>
                <svg class="size-4" viewBox="0 0 16 16"><path d="M1 6h2.500L7 2.500v11L3.500 10H1zM9.500 6c1 1 1 3 0 4M11.500 4.500c2 2 2 5 0 7M13.300 3c3 3 3 7 0 10" fill="none" stroke="#fff" stroke-width="1.200"/></svg>
                <svg class="size-4" viewBox="0 0 16 16"><path d="M6 4.500h6.500a1.500 1.500 0 0 1 1.500 1.500v5a1.500 1.500 0 0 1-1.500 1.500h-9A1.500 1.500 0 0 1 2 11V9M15 7v3" fill="none" stroke="#fff" stroke-width="1.300"/><path d="M3.500 1L.5 6h2L2 9l3.500-4.500h-2z" fill="#fff"/><path d="M5 7h7v3.500H5z" fill="#fff"/></svg>
            </div>
            <p class="text-right">5:19 PM<br>2025-08-25</p>
        </div>
    </footer>

</body>
</html>
